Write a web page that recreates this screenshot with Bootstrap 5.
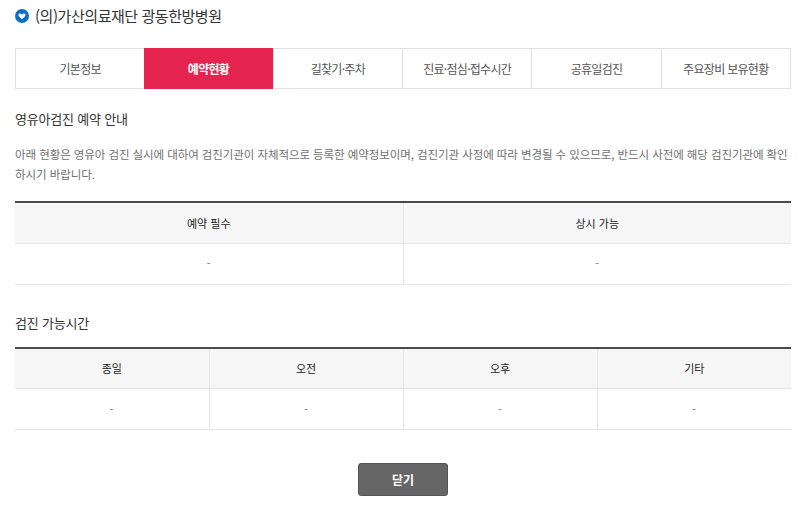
<!DOCTYPE html>
<html lang="ko">
<head>
<meta charset="utf-8">
<title>예약현황</title>
<link href="https://cdn.jsdelivr.net/npm/bootstrap@5.3.0/dist/css/bootstrap.min.css" rel="stylesheet">
<style>
html, body { background: #fff; overflow: hidden; }
body { font-family: "Noto Sans CJK KR", "Liberation Sans", sans-serif; color: #333; width: 800px; height: 505px; }
.page-wrap { padding: 0 9px 0 15px; }
.hosp-title { height: 32px; gap: 6px; font-size: 15px; line-height: 32px; color: #333; font-weight: 400; letter-spacing: -0.45px; }
.hosp-title svg { width: 14px; height: 14px; flex: none; }
.tab-strip { border: 1px solid #e1e1e1; height: 41px; flex-wrap: nowrap; }
.tab-strip .nav-item { flex: 1 1 0; border-left: 1px solid #e1e1e1; }
.tab-strip .nav-item:first-child { border-left: 0; }
.tab-strip .nav-link { height: 39px; line-height: 39px; padding: 0; font-size: 12px; color: #555; text-align: center; letter-spacing: -0.7px; }
.tab-strip .nav-item.on { background: #e5234f; margin: -1px 0; height: 41px; border-left: 0; }
.tab-strip .nav-item.on .nav-link { color: #fff; font-weight: 700; height: 41px; line-height: 41px; }
.sect-head { font-size: 13px; line-height: 20px; font-weight: 400; color: #333; margin: 0; letter-spacing: -0.2px; }
.first-head { margin-top: 20px; }
.guide { font-size: 11.5px; line-height: 20px; color: #707070; margin: 15px 0 17px; letter-spacing: -0.08px; }
.info-grid { table-layout: fixed; border-top: 2px solid #4a4a4a; margin: 0; font-size: 11px; }
.info-grid th, .info-grid td { height: 41px; padding: 0; text-align: center; vertical-align: middle; border-bottom: 1px solid #e6e6e6; border-left: 1px solid #e6e6e6; box-shadow: none; }
.info-grid th:first-child, .info-grid td:first-child { border-left: 0; }
.info-grid th { background: #f6f6f6; font-weight: 400; color: #222; }
.info-grid td { color: #777; background: #fff; }
.second-head { margin-top: 28px; margin-bottom: 14px; }
.close-row { margin-top: 33px; }
.close-btn { width: 90px; height: 33px; padding: 0; background: #666; border: 1px solid #555; border-radius: 3px; color: #fff; font-size: 12px; font-weight: 700; line-height: 31px; }
.close-btn:hover { background: #666; color: #fff; border-color: #555; }
</style>
</head>
<body>
<div class="page-wrap">
  <h1 class="hosp-title d-flex align-items-center mb-3">
    <svg viewBox="0 0 14 14" aria-hidden="true"><circle cx="7" cy="7" r="7" fill="#0b6fc4"/><path d="M7 10.3 3.9 7.3C2.9 6.2 3.6 4.6 5 4.6c.8 0 1.5.4 2 1.1.5-.7 1.2-1.1 2-1.1 1.4 0 2.1 1.6 1.1 2.7z" fill="#fff"/></svg>
    <span>(의)가산의료재단 광동한방병원</span>
  </h1>
  <ul class="nav tab-strip d-flex">
    <li class="nav-item"><a class="nav-link" href="#">기본정보</a></li>
    <li class="nav-item on"><a class="nav-link" href="#">예약현황</a></li>
    <li class="nav-item"><a class="nav-link" href="#">길찾기·주차</a></li>
    <li class="nav-item"><a class="nav-link" href="#">진료·점심·접수시간</a></li>
    <li class="nav-item"><a class="nav-link" href="#">공휴일검진</a></li>
    <li class="nav-item"><a class="nav-link" href="#">주요장비 보유현황</a></li>
  </ul>
  <h2 class="sect-head first-head">영유아검진 예약 안내</h2>
  <p class="guide">아래 현황은 영유아 검진 실시에 대하여 검진기관이 자체적으로 등록한 예약정보이며, 검진기관 사정에 따라 변경될 수 있으므로, 반드시 사전에 해당 검진기관에 확인하시기 바랍니다.</p>
  <table class="table info-grid">
    <thead><tr><th>예약 필수</th><th>상시 가능</th></tr></thead>
    <tbody><tr><td>-</td><td>-</td></tr></tbody>
  </table>
  <h2 class="sect-head second-head">검진 가능시간</h2>
  <table class="table info-grid">
    <thead><tr><th>종일</th><th>오전</th><th>오후</th><th>기타</th></tr></thead>
    <tbody><tr><td>-</td><td>-</td><td>-</td><td>-</td></tr></tbody>
  </table>
  <div class="close-row d-flex justify-content-center">
    <button type="button" class="btn close-btn">닫기</button>
  </div>
</div>
<script src="https://cdn.jsdelivr.net/npm/bootstrap@5.3.0/dist/js/bootstrap.bundle.min.js"></script>
</body>
</html>
